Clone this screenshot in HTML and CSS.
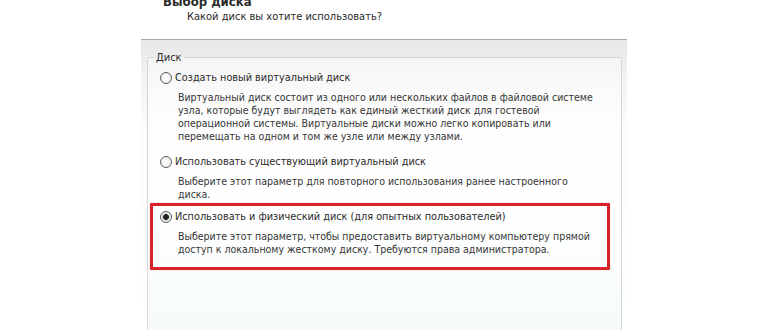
FILE: index.html
```html
<!DOCTYPE html>
<html>
<head>
  <meta charset="utf-8">
  <title>Выбор диска</title>
  <link rel="stylesheet" href="styles.css">
</head>
<body>
  <div class="header">
    <div class="header-title">Выбор диска</div>
    <div class="header-subtitle">Какой диск вы хотите использовать?</div>
  </div>
  <div class="panel">
    <fieldset class="disk-group">
      <legend>Диск</legend>
      <!-- 新建虚拟磁盘 -->
      <label class="option">
        <span class="option-head"><input type="radio" name="disk" class="radio"> Создать новый виртуальный диск</span>
        <span class="option-desc">Виртуальный диск состоит из одного или нескольких файлов в файловой системе<br>узла, которые будут выглядеть как единый жесткий диск для гостевой<br>операционной системы. Виртуальные диски можно легко копировать или<br>перемещать на одном и том же узле или между узлами.</span>
      </label>
      <label class="option">
        <span class="option-head"><input type="radio" name="disk" class="radio"> Использовать существующий виртуальный диск</span>
        <span class="option-desc">Выберите этот параметр для повторного использования ранее настроенного<br>диска.</span>
      </label>
      <!-- 物理磁盘（红框标注） -->
      <label class="option option-marked">
        <span class="option-head"><input type="radio" name="disk" class="radio" checked> Использовать и физический диск (для опытных пользователей)</span>
        <span class="option-desc">Выберите этот параметр, чтобы предоставить виртуальному компьютеру прямой<br>доступ к локальному жесткому диску. Требуются права администратора.</span>
      </label>
    </fieldset>
  </div>
</body>
</html>
```

FILE: styles.css
```css
:root {
    --dlg-text: #2a2a2a;
    --dlg-desc: #363636;
    --dlg-border: #d6d6d6;
    --mark-red: #d9212a;
}

body {
    margin: 0;
    background: #fff;
    color: var(--dlg-text);
    font-family: "DejaVu Sans Condensed", "DejaVu Sans", sans-serif;
    font-size: 11px;
    overflow: hidden;
}

/* 头部 */
.header-title {
    margin: -5px 0 0 163px;
    font-weight: bold;
    font-size: 13px;
    line-height: 14px;
}

.header-subtitle {
    margin: 1px 0 0 187px;
    line-height: 14px;
}

/* 主面板 */
.panel {
    margin: 15px 0 0 141px;
    width: 475px;
    height: 290px;
    padding: 11px 5px 0 6px;
    border-top: 1px solid #a8a8a8;
    background: linear-gradient(to bottom, #e7e7e7 0, #f3f3f3 40px, #fcfcfc 90px, #fff 100%);
}

.disk-group {
    margin: 0;
    height: 100%;
    padding: 0 0 0 2px;
    border: 1px solid var(--dlg-border);
    border-radius: 2px;
    background: linear-gradient(to bottom, rgba(255, 255, 255, 0.4) 0, rgba(255, 255, 255, 0.9) 150px, #f5fafb 100%);
}

.disk-group legend {
    margin-left: 4px;
    padding: 0 2px;
    line-height: 13px;
}

.option {
    display: block;
    width: 454px;
    padding: 4px 0 2px;
    border: 3px solid transparent;
    cursor: pointer;
}

.option-head {
    display: flex;
    align-items: center;
    gap: 3px;
    font-size: 10.8px;
    line-height: 14px;
}

.option-desc {
    display: block;
    margin: 6px 0 0 25px;
    color: var(--dlg-desc);
    font-size: 10.5px;
    line-height: 13px;
    white-space: nowrap;
}

/* 红框标注，略微压在上一项上 */
.option-marked {
    margin-top: -3px;
    padding-bottom: 11px;
    border-color: var(--mark-red);
    border-radius: 1px;
    box-shadow: 0 0 1px rgba(150, 0, 0, 0.6);
}

/* 单选框 */
.radio {
    appearance: none;
    width: 12px;
    height: 12px;
    margin: 0 0 0 7px;
    border: 1px solid #5e5e5e;
    border-radius: 50%;
    background: radial-gradient(circle, #fff 0, #f2f2f2 60%, #dcdcdc 100%);
}

.radio:checked {
    background: radial-gradient(circle, #1e1e1e 0, #2a2a2a 2.6px, #cfcfcf 3.2px, #f4f4f4 4.2px, #e2e2e2 100%);
}
```
